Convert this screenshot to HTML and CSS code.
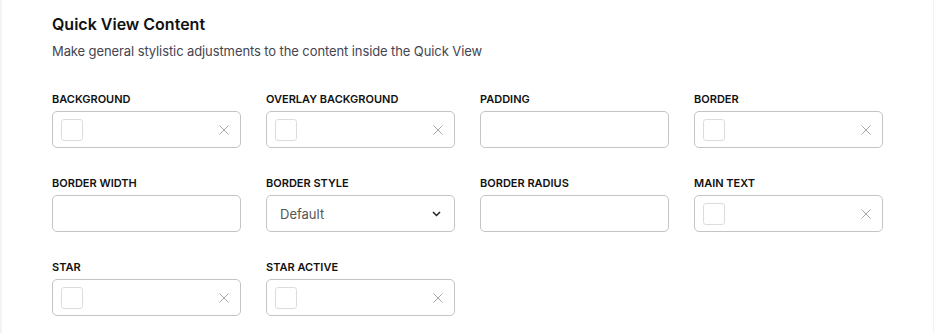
FILE: index.html
```html
<!DOCTYPE html>
<html lang="en">
<head>
  <meta charset="UTF-8" />
  <title>Quick View Content</title>
  <link rel="stylesheet" href="styles.css">
</head>
<body>
  <div class="panel">
    <h2 class="panel-title">Quick View Content</h2>
    <p class="panel-desc">Make general stylistic adjustments to the content inside the Quick View</p>

    <div class="field-grid">
      <div class="field">
        <label>BACKGROUND</label>
        <div class="control color-control">
          <span class="swatch"></span>
          <svg class="clear" width="10" height="10" viewBox="0 0 10 10"><path d="M0.5 0.5l9 9M9.5 0.5l-9 9"/></svg>
        </div>
      </div>
      <div class="field">
        <label>OVERLAY BACKGROUND</label>
        <div class="control color-control">
          <span class="swatch"></span>
          <svg class="clear" width="10" height="10" viewBox="0 0 10 10"><path d="M0.5 0.5l9 9M9.5 0.5l-9 9"/></svg>
        </div>
      </div>
      <div class="field">
        <label>PADDING</label>
        <input class="control" type="text">
      </div>
      <div class="field">
        <label>BORDER</label>
        <div class="control color-control">
          <span class="swatch"></span>
          <svg class="clear" width="10" height="10" viewBox="0 0 10 10"><path d="M0.5 0.5l9 9M9.5 0.5l-9 9"/></svg>
        </div>
      </div>

      <div class="field">
        <label>BORDER WIDTH</label>
        <input class="control" type="text">
      </div>
      <div class="field">
        <label>BORDER STYLE</label>
        <div class="control select-control">
          <span>Default</span>
          <svg class="chevron" width="9" height="6" viewBox="0 0 9 6"><path d="M1 1l3.5 3.5L8 1" fill="none" stroke="#222" stroke-width="1.5"/></svg>
        </div>
      </div>
      <div class="field">
        <label>BORDER RADIUS</label>
        <input class="control" type="text">
      </div>
      <div class="field">
        <label>MAIN TEXT</label>
        <div class="control color-control">
          <span class="swatch"></span>
          <svg class="clear" width="10" height="10" viewBox="0 0 10 10"><path d="M0.5 0.5l9 9M9.5 0.5l-9 9"/></svg>
        </div>
      </div>

      <div class="field">
        <label>STAR</label>
        <div class="control color-control">
          <span class="swatch"></span>
          <svg class="clear" width="10" height="10" viewBox="0 0 10 10"><path d="M0.5 0.5l9 9M9.5 0.5l-9 9"/></svg>
        </div>
      </div>
      <div class="field">
        <label>STAR ACTIVE</label>
        <div class="control color-control">
          <span class="swatch"></span>
          <svg class="clear" width="10" height="10" viewBox="0 0 10 10"><path d="M0.5 0.5l9 9M9.5 0.5l-9 9"/></svg>
        </div>
      </div>
    </div>
  </div>
</body>
</html>
```

FILE: styles.css
```css
* {
  margin: 0;
  padding: 0;
  box-sizing: border-box;
  font-family: 'Inter', 'Noto Sans', sans-serif;
}

body {
  background-color: #f3f3f5;
  min-height: 100vh;
}

.panel {
  background-color: white;
  margin-left: 2px;
  width: 931px;
  min-height: 333px;
  padding: 14px 50px 0 50px;
}

.panel-title {
  font-size: 16px;
  line-height: 20px;
  font-weight: 600;
  color: #111;
}

.panel-desc {
  margin-top: 8px;
  font-size: 13px;
  line-height: 18px;
  letter-spacing: -0.1px;
  color: #45454f;
}

.field-grid {
  margin-top: 32px;
  display: grid;
  grid-template-columns: repeat(4, 189px);
  column-gap: 25px;
  row-gap: 28px;
}

.field label {
  display: block;
  font-size: 11px;
  line-height: 14px;
  font-weight: 600;
  color: #111;
  margin-bottom: 5px;
}

.control {
  display: block;
  width: 189px;
  height: 37px;
  border: 1px solid #c4c4c4;
  border-radius: 5px;
  background-color: white;
  outline: none;
}

.color-control {
  display: flex;
  align-items: center;
  justify-content: space-between;
  padding: 0 11px 0 8px;
}

.swatch {
  width: 22px;
  height: 22px;
  border: 1px solid #dcdcdc;
  border-radius: 3px;
}

.clear {
  stroke: #a8a8a8;
  stroke-width: 1;
  fill: none;
}

.select-control {
  display: flex;
  align-items: center;
  justify-content: space-between;
  padding: 0 13px 0 13px;
  font-size: 13px;
  color: #555;
}
```
